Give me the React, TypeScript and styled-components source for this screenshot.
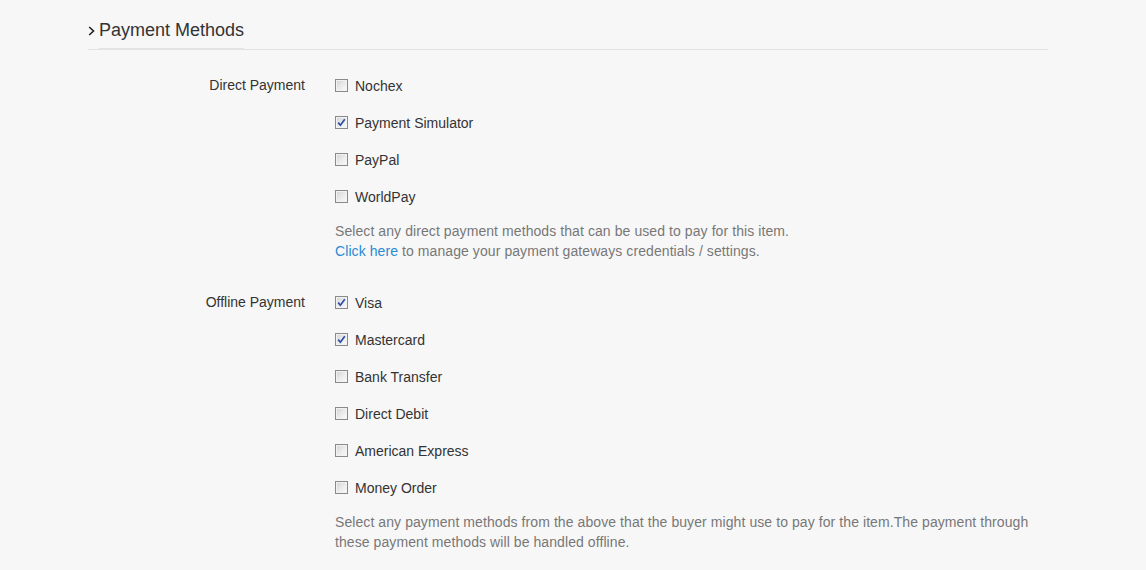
import React from 'react';
import styled, { createGlobalStyle } from 'styled-components';

const GlobalStyle = createGlobalStyle`
  html, body {
    margin: 0;
    padding: 0;
    background: #f7f7f7;
  }
  body {
    font-family: "Liberation Sans", Arial, Helvetica, sans-serif;
    color: #333;
  }
`;

const Page = styled.div`
  width: 960px;
  margin-left: 88px;
  padding-top: 14px;
`;

const Header = styled.div`
  display: flex;
  align-items: flex-end;
  border-bottom: 1px solid #e1e1e1;
  height: 35px;
`;

const Chevron = styled.svg`
  width: 7px;
  height: 10px;
  margin-right: 4px;
  margin-bottom: 13px;
`;

const Title = styled.h3`
  margin: 0 0 -1px 0;
  font-size: 18px;
  font-weight: normal;
  color: #333;
  line-height: 24px;
  padding-bottom: 6px;
  border-bottom: 2px solid #e3e3e3;
`;

const Section = styled.div`
  display: grid;
  grid-template-columns: 217px 1fr;
  column-gap: 30px;
  padding-top: 17px;
`;

const Group = styled.div`
  display: contents;
`;

const GroupLabel = styled.div`
  font-size: 14px;
  line-height: 37px;
  height: 37px;
  text-align: right;
  color: #333;
`;

const Options = styled.div<{ $last?: boolean }>`
  display: flex;
  flex-direction: column;
  margin-bottom: ${(p) => (p.$last ? '0' : '23px')};
`;

const OptionRow = styled.label`
  display: flex;
  align-items: center;
  height: 37px;
  font-size: 14px;
  color: #333;
  cursor: pointer;
`;

const Box = styled.span`
  position: relative;
  box-sizing: border-box;
  width: 13px;
  height: 13px;
  margin-right: 7px;
  border: 1px solid #8a8a8a;
  background: linear-gradient(135deg, #d2d2d2 0%, #ececec 55%, #fafafa 100%);
  box-shadow: inset 0 0 0 1px #f2f2f2;
  flex-shrink: 0;

  svg {
    position: absolute;
    left: 1px;
    top: 1px;
  }
`;

const Help = styled.div`
  margin-top: 6px;
  font-size: 14px;
  line-height: 20px;
  letter-spacing: 0.08px;
  color: #777;
  max-width: 700px;
`;

const HelpLink = styled.a`
  color: #2a8ad4;
  text-decoration: none;
`;

const Check = ({ checked }: { checked: boolean }) => (
  <Box>
    {checked && (
      <svg width="9" height="9" viewBox="0 0 9 9">
        <path d="M1.2 4.6 L3.4 7.2 L7.8 1.2" fill="none" stroke="#2c4da6" strokeWidth="1.7" />
      </svg>
    )}
  </Box>
);

const direct = [
  { name: 'Nochex', checked: false },
  { name: 'Payment Simulator', checked: true },
  { name: 'PayPal', checked: false },
  { name: 'WorldPay', checked: false },
];

const offline = [
  { name: 'Visa', checked: true },
  { name: 'Mastercard', checked: true },
  { name: 'Bank Transfer', checked: false },
  { name: 'Direct Debit', checked: false },
  { name: 'American Express', checked: false },
  { name: 'Money Order', checked: false },
];

const App = () => {
  return (
    <>
      <GlobalStyle />
      <Page>
        <Header>
          <Chevron viewBox="0 0 7 10">
            <path d="M1.2 1 L5.5 5 L1.2 9" fill="none" stroke="#222" strokeWidth="1.6" />
          </Chevron>
          <Title>Payment Methods</Title>
        </Header>

        <Section>
          <Group>
            <GroupLabel>Direct Payment</GroupLabel>
            <Options>
              {direct.map((o) => (
                <OptionRow key={o.name}>
                  <Check checked={o.checked} />
                  {o.name}
                </OptionRow>
              ))}
              <Help>
                Select any direct payment methods that can be used to pay for this item.
                <br />
                <HelpLink href="#">Click here</HelpLink> to manage your payment gateways credentials / settings.
              </Help>
            </Options>
          </Group>

          <Group>
            <GroupLabel>Offline Payment</GroupLabel>
            <Options $last>
              {offline.map((o) => (
                <OptionRow key={o.name}>
                  <Check checked={o.checked} />
                  {o.name}
                </OptionRow>
              ))}
              <Help>
                Select any payment methods from the above that the buyer might use to pay for the item.The payment
                through these payment methods will be handled offline.
              </Help>
            </Options>
          </Group>
        </Section>
      </Page>
    </>
  );
};

export default App;
